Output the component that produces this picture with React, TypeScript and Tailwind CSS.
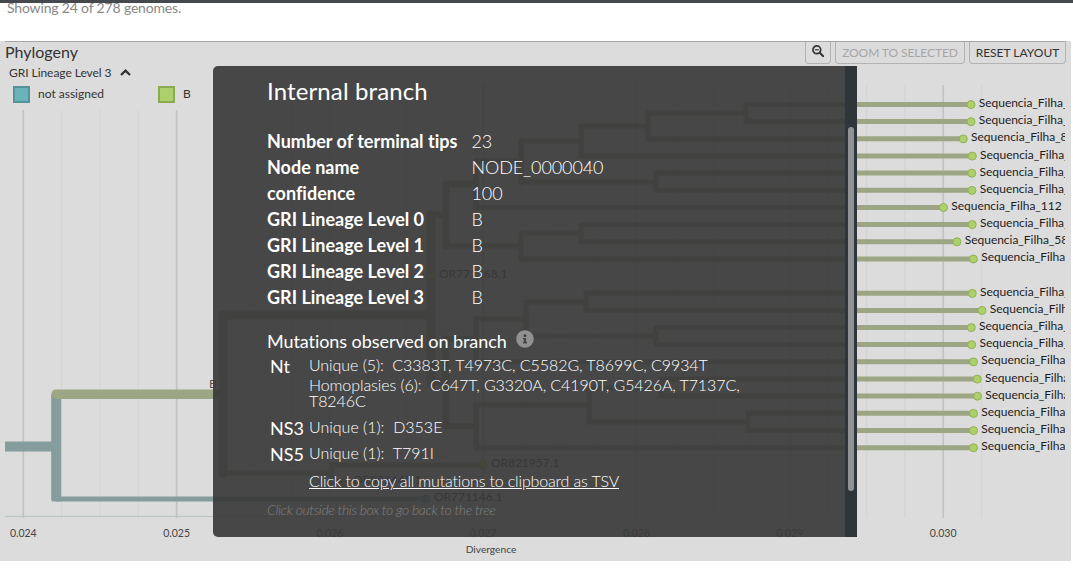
import { FaInfoCircle } from "react-icons/fa";

type Seg = [number, number, number, number, number];

const tips: [number, number, string][] = [
  [971, 104.5, "Sequencia_Filha_1"],
  [971, 121.6, "Sequencia_Filha_1"],
  [963.3, 138.8, "Sequencia_Filha_8"],
  [972.3, 156, "Sequencia_Filha_1"],
  [971.8, 173.1, "Sequencia_Filha_1"],
  [972, 190.3, "Sequencia_Filha_1"],
  [943.5, 207.4, "Sequencia_Filha_112"],
  [972.2, 224.5, "Sequencia_Filha_1"],
  [957, 241.7, "Sequencia_Filha_58"],
  [973.4, 258.9, "Sequencia_Filha_1"],
  [972.3, 293.3, "Sequencia_Filha_1"],
  [982, 310.4, "Sequencia_Filha_1"],
  [971.3, 327.5, "Sequencia_Filha_1"],
  [971.7, 344.6, "Sequencia_Filha_1"],
  [973.5, 361.8, "Sequencia_Filha_1"],
  [977.3, 379, "Sequencia_Filha_1"],
  [977.5, 396.1, "Sequencia_Filha_1"],
  [973.5, 413.3, "Sequencia_Filha_1"],
  [973.5, 430.5, "Sequencia_Filha_1"],
  [973.5, 447.7, "Sequencia_Filha_1"],
];

const starts = [746, 746, 648, 581, 656, 656, 476, 581, 581, 521, 586, 586, 656, 656, 476, 661, 661, 748, 748, 476];

const inner: Seg[] = [
  [746, 104.5, 746, 121.6, 5], [648, 113, 746, 113, 5],
  [648, 113, 648, 138.8, 5], [581, 126, 648, 126, 5],
  [581, 126, 581, 156, 5], [521, 141, 581, 141, 5],
  [521, 141, 521, 182, 6], [521, 182, 656, 182, 5],
  [656, 173.1, 656, 190.3, 5], [476, 161, 521, 161, 6],
  [476, 161, 476, 207.4, 6], [446, 184, 476, 184, 7],
  [446, 184, 446, 246, 7], [446, 246, 521, 246, 5],
  [521, 233, 521, 258.8, 5], [521, 233, 581, 233, 5],
  [581, 224.5, 581, 241.7, 5], [431, 215, 446, 215, 7],
  [431, 215, 431, 382, 9], [431, 382, 446, 382, 7],
  [446, 339, 446, 426, 7], [446, 339, 476, 339, 6],
  [476, 319, 476, 361.8, 6], [476, 319, 526, 319, 5],
  [526, 302, 526, 336, 5], [526, 302, 586, 302, 5],
  [586, 293.3, 586, 310.4, 5], [526, 336, 656, 336, 5],
  [656, 327.5, 656, 344.6, 5], [446, 426, 476, 426, 6],
  [476, 405, 476, 447.7, 6], [476, 405, 589, 405, 5],
  [589, 388, 589, 422, 5], [589, 388, 661, 388, 5],
  [661, 379, 661, 396, 5], [589, 422, 748, 422, 5],
  [748, 413.3, 748, 430.5, 5], [223, 315, 431, 315, 9],
  [223, 315, 223, 473, 9], [223, 473, 332, 473, 5],
  [332, 465, 332, 482, 5], [332, 465, 483, 465, 5],
  [332, 482, 343, 482, 5], [56.2, 394.2, 223, 394.2, 9.5],
];

const hidden: [number, number, string][] = [
  [431, 276, "OR771168.1"],
  [483, 465, "OR821957.1"],
  [345, 482, "OR891645.1"],
];

const attributes = [
  ["Number of terminal tips", "23"],
  ["Node name", "NODE_0000040"],
  ["confidence", "100"],
  ["GRI Lineage Level 0", "B"],
  ["GRI Lineage Level 1", "B"],
  ["GRI Lineage Level 2", "B"],
  ["GRI Lineage Level 3", "B"],
];

const gridLines = Array.from({ length: 26 }, (_, i) => ({ x: 23.3 + i * 38.33, major: i % 4 === 0 }));
const ticks = ["0.024", "0.025", "0.026", "0.027", "0.028", "0.029", "0.030"];

function Tree() {
  return (
    <svg className="absolute left-0 top-0 h-[520px] w-[1065px]" viewBox="0 41 1065 520">
      {gridLines.map((g) => (
        <line key={g.x} x1={g.x} x2={g.x} y1={g.x < 210 ? 110 : 85} y2={518} stroke={g.major ? "#c3c3c3" : "#d3d3d3"} strokeWidth={g.major ? 1.7 : 1} />
      ))}
      <line x1={5} x2={500} y1={516.4} y2={516.4} stroke="#b5c2bd" strokeWidth={1} />
      <g stroke="#869d9e" fill="none">
        <path d="M5 446.6H56.2" strokeWidth={10} />
        <path d="M56.2 394.2V498" strokeWidth={10} />
        <path d="M51.2 498H61.2V501.6H53.2Q51.2 501.6 51.2 499.6Z" fill="#869d9e" stroke="none" />
        <path d="M56.2 499H426" strokeWidth={5.2} />
      </g>
      <g stroke="#9ca584" strokeLinecap="round">
        {inner.map(([x1, y1, x2, y2, w], i) => (
          <line key={i} x1={x1} y1={y1} x2={x2} y2={y2} strokeWidth={w} />
        ))}
        {tips.map(([x, y], i) => (
          <line key={i} x1={starts[i]} x2={x} y1={y} y2={y} strokeWidth={5} />
        ))}
      </g>
      <g fontFamily="Lato, sans-serif" fontSize="12" fill="#1c1c1c" letterSpacing="-0.03">
        {tips.map(([x, y, label], i) => (
          <g key={i}>
            <circle cx={x} cy={y + 0.1} r={4} fill="#add06a" stroke="#91b156" />
            <text x={x + 7.8} y={y + 2.5}>{label}</text>
          </g>
        ))}
        {hidden.map(([x, y, label]) => (
          <g key={label}>
            <circle cx={x} cy={y} r={4} fill="#add06a" stroke="#91b156" />
            <text x={x + 8} y={y + 2}>{label}</text>
          </g>
        ))}
        <circle cx={426} cy={499} r={4} fill="#67b1b8" stroke="#4e9197" />
        <text x={434} y={501}>OR771146.1</text>
        <text x={209} y={388} fill="#555">B</text>
      </g>
      <g fontFamily="Lato, sans-serif" fontSize="10.5" fill="#444" textAnchor="middle">
        {ticks.map((t, i) => (
          <text key={t} x={23.3 + i * 153.3} y={537}>{t}</text>
        ))}
        <text x={491} y={553} fontSize="10.2">Divergence</text>
      </g>
    </svg>
  );
}

function Modal() {
  return (
    <div className="absolute left-[213px] top-[25px] flex h-[471px] w-[644px] overflow-hidden rounded-l-[5px] bg-[rgba(58,58,58,0.92)] text-white">
      <div className="flex-1 pl-[54px]">
        <h2 className="mt-[10px] text-[24px] font-normal leading-[29px] tracking-[0.12px]">Internal branch</h2>
        <dl className="mt-[23px] grid grid-cols-[205px_1fr] text-[18px] leading-[26px]">
          {attributes.map(([name, value]) => (
            <div key={name} className="contents">
              <dt className="font-bold tracking-[-0.03px] first:tracking-[0.01px]">{name}</dt>
              <dd className="-ml-[0.5px] font-light tracking-[-0.1px]">{value}</dd>
            </div>
          ))}
        </dl>
        <div className="mt-[18px] flex h-[26px] items-center text-[18px] tracking-[-0.07px]">
          Mutations observed on branch
          <FaInfoCircle className="mb-1 ml-[9.5px] size-[18px] text-[#919191]" />
        </div>
        <div className="grid grid-cols-[42px_1fr] text-[16px] font-light tracking-[-0.06px]">
          <div className="pl-[3px] text-[18px] font-normal leading-6">Nt</div>
          <div className="h-[62px] pt-[3px] leading-4">
            <div className="mb-1 whitespace-pre">Unique (5):  C3383T, T4973C, C5582G, T8699C, C9934T</div>
            <div className="w-[460px] whitespace-pre-wrap tracking-[-0.09px]">Homoplasies (6):  C647T, G3320A, C4190T, G5426A, T7137C, T8246C</div>
          </div>
          <div className="h-[26px] pl-[3px] text-[18px] font-normal leading-6">NS3</div>
          <div className="whitespace-pre pt-[3px] leading-4 tracking-normal">Unique (1):  D353E</div>
          <div className="h-[26px] pl-[3px] text-[18px] font-normal leading-6">NS5</div>
          <div className="whitespace-pre pt-[3px] leading-4 tracking-normal">Unique (1):  T791I</div>
        </div>
        <div className="ml-[42px] mt-[3px] text-[16px] font-light leading-[20px] tracking-[-0.16px] underline">Click to copy all mutations to clipboard as TSV</div>
        <div className="mt-[10px] text-[14px] font-light italic leading-[18px] tracking-[-0.36px] text-[#808080]">Click outside this box to go back to the tree</div>
      </div>
      <div className="w-3 bg-[#2f363b] px-[3px] pt-[61px]">
        <div className="h-[364px] rounded-full bg-[#8f9395]" />
      </div>
    </div>
  );
}

export default function App() {
  return (
    <div className="h-[571px] w-[1073px] overflow-hidden bg-white font-[Lato,sans-serif] text-[#333]">
      <div className="h-[41px] border-t-[3px] border-[#45484c]">
        <div className="-mt-[5px] pl-[7px] text-[14px] leading-5 tracking-[-0.17px] text-[#888]">Showing 24 of 278 genomes.</div>
      </div>
      <section className="relative h-[520px] w-[1071px] bg-[#dcdcdc]">
        <Tree />
        <div className="relative ml-[5px] mr-[5px] flex h-[24px] justify-between border-t border-[#a5a5a5]">
          <h1 className="text-[16px] leading-5">Phylogeny</h1>
          <div className="flex gap-1 text-[12px] leading-[22px]">
            <button className="flex h-[22px] w-[26px] items-center justify-center rounded-b border border-t-0 border-[#b3b3b3] pb-[3px]">
              <svg className="size-3" viewBox="0 0 12 12" fill="none" stroke="#333" strokeWidth="1.7">
                <circle cx="4.8" cy="4.8" r="3.9" />
                <path d="M7.8 7.8L11.2 11.2" strokeWidth="2" strokeLinecap="round" />
                <path d="M2.9 4.8H6.7" strokeWidth="1.2" />
              </svg>
            </button>
            <button className="h-[22px] w-[130px] rounded-b border border-t-0 border-[#b3b3b3] tracking-[-0.08px] text-[#a6a6a6]">ZOOM TO SELECTED</button>
            <button className="h-[22px] w-[97px] rounded-b border border-t-0 border-[#b3b3b3]">RESET LAYOUT</button>
          </div>
        </div>
        <div className="relative flex h-[14px] items-center gap-[8px] pl-[9px] pt-px text-[12px] tracking-[-0.05px]">
          GRI Lineage Level 3
          <svg className="h-[7px] w-[11px]" viewBox="0 0 11 7" fill="none" stroke="#333" strokeWidth="2.3"><path d="M1 6L5.5 1.7L10 6" /></svg>
        </div>
        <div className="relative mt-[7px] flex h-[17px] items-center text-[12px]">
          <span className="ml-[13px] size-[17px] border-2 border-[#539499] bg-[#69b3b9]" />
          <span className="-mt-px ml-2 w-[120px]">not assigned</span>
          <span className="size-[17px] border-2 border-[#8baa54] bg-[#add06a]" />
          <span className="-mt-px ml-2">B</span>
        </div>
        <Modal />
      </section>
    </div>
  );
}
